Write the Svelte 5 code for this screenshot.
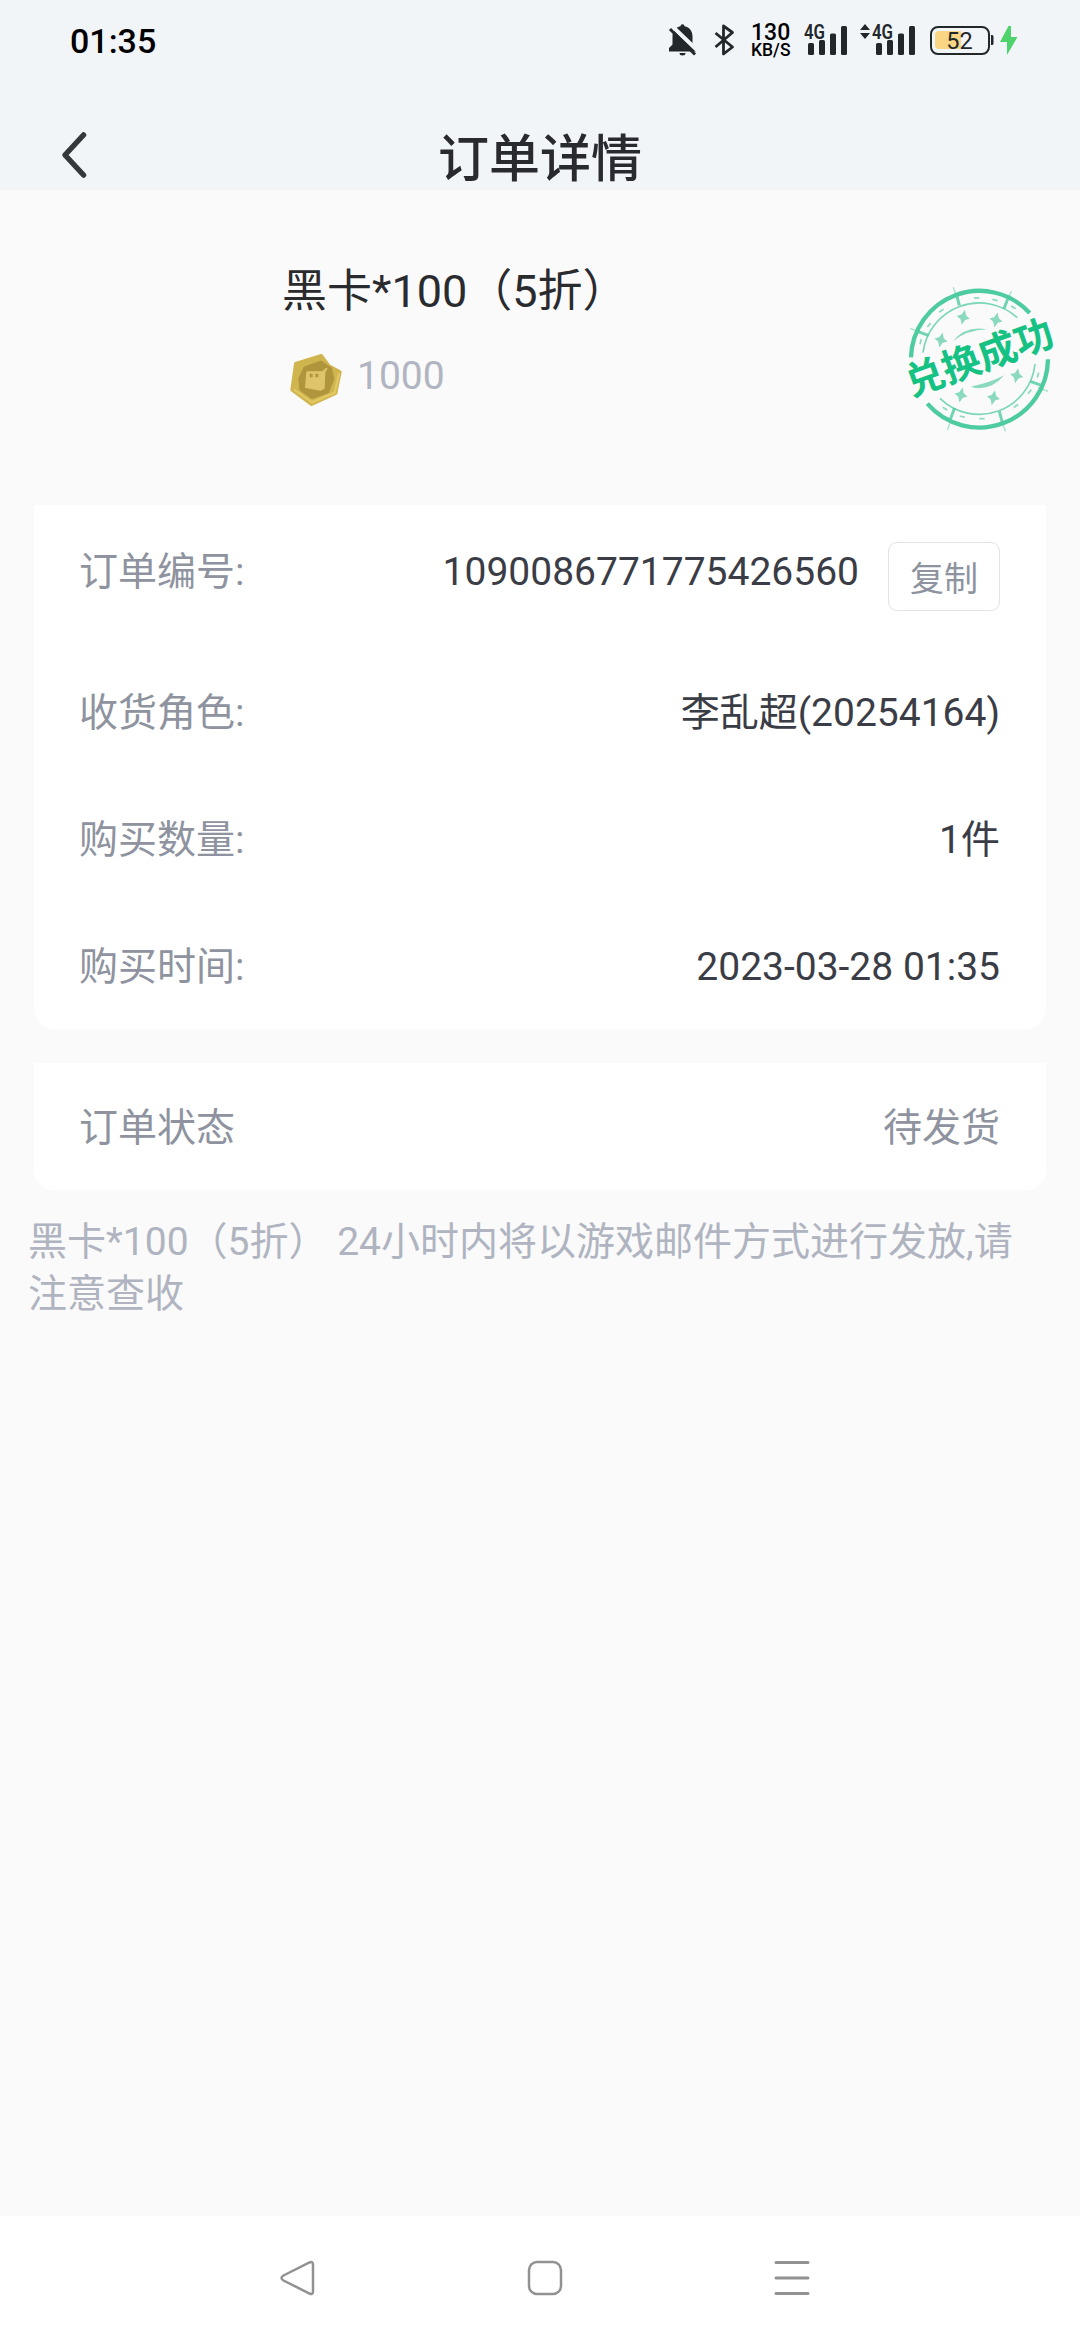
<script>
    const order = {
        name: '黑卡*100（5折）',
        price: '1000',
        number: '1090086771775426560',
        status: '待发货'
    };

    const rows = [
        { label: '收货角色:', value: '李乱超(20254164)' },
        { label: '购买数量:', value: '1件' },
        { label: '购买时间:', value: '2023-03-28 01:35' }
    ];

    const stars = [[250, 142], [348, 150], [183, 210], [410, 317], [340, 383], [243, 375]];

    // x, y, rotation of the short dashes in the stamp's ring
    const dashes = [
        [122, 215, -75], [147, 165, -52], [184, 122, -35], [290, 84, 0], [345, 90, 14], [400, 112, 32],
        [474, 315, -75], [449, 365, -52], [408, 408, -35], [306, 446, 0], [247, 440, 14], [195, 416, 32]
    ];

    function copyNumber() {
        navigator.clipboard?.writeText(order.number);
    }
</script>

{#snippet signal()}
    <svg class="signal" width="44" height="32" viewBox="0 0 44 32">
        <text x="0" y="14.5" textLength="21" lengthAdjust="spacingAndGlyphs">4G</text>
        <rect x="4" y="19" width="6" height="12" rx="1.5"/>
        <rect x="15" y="16" width="6" height="15" rx="1.5"/>
        <rect x="26" y="9.5" width="6" height="21.5" rx="1.5"/>
        <rect x="37" y="2" width="6" height="29" rx="1.5"/>
    </svg>
{/snippet}

<div class="page">
    <header>
        <div class="status-bar">
            <span class="clock">01:35</span>
            <div class="status-icons">
                <svg class="bell" width="30" height="32" viewBox="0 0 30 32">
                    <path fill="#22272a" d="M12.500 2.200a2 2 0 0 1 4 0c5.200 1 8 5 8 10v7.300l4.500 4.500v3.500H1v-3.500l3.500-3.500v-8c0-5 3-9.300 8-10.300z"/>
                    <path fill="#22272a" d="M11.500 29h6a3 2.500 0 0 1-6 0z"/>
                    <path stroke="#f2f5f8" stroke-width="4" d="M5 3l25 24"/>
                    <path stroke="#22272a" stroke-width="3" d="M2 5l25 25.500"/>
                </svg>
                <svg class="bluetooth" width="22" height="32" viewBox="0 0 22 32">
                    <path fill="none" stroke="#22272a" stroke-width="2.800" stroke-linejoin="round" d="M1.500 9l17 14-9 7V2l9 6.500-17 14.500"/>
                </svg>
                <div class="speed">
                    <b>130</b>
                    <span>KB/S</span>
                </div>
                {@render signal()}
                <svg class="data" width="12" height="16" viewBox="0 0 12 16">
                    <path fill="#22272a" d="M1 6l5-6 5 6zM1 9h10l-5 6z"/>
                </svg>
                {@render signal()}
                <svg width="64" height="32" viewBox="0 0 64 32">
                    <rect x="1" y="3" width="58" height="27" rx="7" fill="none" stroke="#22272a" stroke-width="2"/>
                    <path fill="#fad583" d="M9 7h22v18H9a4 4 0 0 1-4-4V11a4 4 0 0 1 4-4z"/>
                    <path fill="#22272a" d="M61 11h1a1.500 1.500 0 0 1 1.500 1.500v7A1.500 1.500 0 0 1 62 21h-1z"/>
                    <text class="battery-text" x="29.500" y="25" text-anchor="middle">52</text>
                </svg>
                <svg class="bolt" width="20" height="32" viewBox="0 0 20 32">
                    <path fill="#4fd36c" d="M9.500 2L1 18h7v13l10.500-18h-6.500V2z"/>
                </svg>
            </div>
        </div>
        <div class="title-bar">
            <button class="back" aria-label="返回">
                <svg width="28" height="50" viewBox="0 0 28 50">
                    <path d="M23.500 5L5 25l18.500 20" fill="none" stroke="#35383a" stroke-width="5.500" stroke-linecap="round" stroke-linejoin="round"/>
                </svg>
            </button>
            <h1>订单详情</h1>
        </div>
    </header>

    <section class="product">
        <div class="info">
            <h2>{order.name}</h2>
            <div class="price">
                <svg width="54" height="54" viewBox="0 0 162 162">
                    <path fill="#d0b44e" stroke="#d0b44e" stroke-width="10" stroke-linejoin="round" d="M97 8l23 31 33 18-13 64-72 33-59-43 11-79z"/>
                    <path fill="none" stroke="#e3c861" stroke-width="7" stroke-linejoin="round" d="M150 61l-13 58-68 29-54-38"/>
                    <path fill="#b0953d" stroke="#b0953d" stroke-width="6" stroke-linejoin="round" d="M47 43l48-17 31 20 7 31-16 41-48 17-35-25-3-33z"/>
                    <path fill="#dfc46a" stroke="#dfc46a" stroke-width="4" stroke-linejoin="round" d="M54 57l47-1 12-10-6 12-2 48-10 5-45-8z"/>
                    <path fill="#b0953d" d="M62 62h9v11h-9zM79 62h9v11h-9z"/>
                </svg>
                <span>{order.price}</span>
            </div>
        </div>
        <svg class="stamp" width="200" height="180" viewBox="0 0 600 540">
            <g fill="none" stroke="#4fcba0">
                <path stroke-width="13" d="M93 262A205 205 0 0 1 449 129M504 268A206 206 0 0 1 142 401"/>
                <path stroke-width="5" opacity=".75" d="M129 248A170 170 0 0 1 412 143M465 282A168 168 0 0 1 180 385"/>
                <path stroke-width="9" opacity=".8" d="M112 184l33 12M229 72l9 34M385 82l-13 34M484 346l-33-12M367 458l-9-34M211 448l13-34"/>
                <path stroke-width="4" opacity=".5" d="M90 175l30 11M220 52l10 30M394 63l-9 24M504 364l-30-11M376 484l-10-30M202 480l9-24"/>
            </g>
            <g fill="#8bd9bf">
                {#each dashes as [x, y, angle]}
                    <rect x="-8" y="-2.500" width="16" height="5" transform="translate({x} {y}) rotate({angle})"/>
                {/each}
                {#each stars as [x, y]}
                    <path transform="translate({x} {y}) rotate(12)" d="M0-23L7-7 20 0 7 7 0 23-7 7-20 0-7-7z"/>
                {/each}
                <path d="M219 213q38-48 103-35q-60 2-103 35zM272 350q55 18 101-34q-44 23-101 34z"/>
            </g>
            <text x="298" y="303" text-anchor="middle" transform="rotate(-20 300 262)">兑换成功</text>
        </svg>
    </section>

    <section class="card">
        <div class="row first">
            <span class="label">订单编号:</span>
            <span class="value">{order.number}</span>
            <button class="copy" onclick={copyNumber}>复制</button>
        </div>
        {#each rows as row}
            <div class="row">
                <span class="label">{row.label}</span>
                <span class="value">{row.value}</span>
            </div>
        {/each}
    </section>

    <section class="card">
        <div class="row">
            <span class="label">订单状态</span>
            <span class="value muted">{order.status}</span>
        </div>
    </section>

    <p class="note">{order.name} 24小时内将以游戏邮件方式进行发放,请注意查收</p>

    <nav>
        <svg width="36" height="36" viewBox="0 0 36 36">
            <path d="M3.500 15.500L29.500 2.500Q33 1 33 4.500v27q0 3.500-3.500 2L3.500 20.500q-4-2.500 0-5z"/>
        </svg>
        <svg width="36" height="36" viewBox="0 0 36 36">
            <rect x="2" y="2" width="32" height="32" rx="8"/>
        </svg>
        <svg class="menu" width="36" height="36" viewBox="0 0 36 36">
            <path d="M2 2.500h32M2 18h32M2 33.500h32"/>
        </svg>
    </nav>
</div>

<style>
    :global(body) {
        margin: 0;
        background: #fafafa;
    }

    .page {
        display: flex;
        flex-direction: column;
        width: 1080px;
        height: 2340px;
        background: #fafafa;
        font-family: Roboto, 'Noto Sans CJK SC', sans-serif;
        font-size: 39px;
    }

    button {
        padding: 0;
        background: none;
        border: none;
        font-family: inherit;
        cursor: pointer;
    }

    svg {
        display: block;
        flex: none;
        overflow: visible;
    }

    /* Header */
    header {
        height: 190px;
        background: #f2f5f8;
    }

    .status-bar {
        display: flex;
        justify-content: space-between;
        height: 80px;
        padding: 0 61px 0 70px;
    }

    .clock {
        line-height: 82px;
        font-size: 34px;
        font-weight: 500;
        color: #000;
    }

    .status-icons {
        display: flex;
        align-items: flex-start;
        padding-top: 24px;
    }

    .bell {
        margin-right: 16px;
    }

    .bluetooth {
        margin-right: 15px;
    }

    .speed {
        display: flex;
        flex-direction: column;
        width: 53px;
        color: #000;
    }

    .speed b {
        height: 19px;
        line-height: 17px;
        font-size: 23px;
        font-weight: 500;
    }

    .speed span {
        line-height: 15px;
        font-size: 17.5px;
        font-weight: 500;
    }

    .signal {
        fill: #22272a;
        font-size: 20px;
        font-weight: 600;
    }

    .data {
        margin: 0 1px 0 11px;
    }

    .signal + svg:not(.data) {
        margin-left: 14px;
    }

    .battery-text {
        fill: #22272a;
        font-size: 23.5px;
        font-weight: 400;
    }

    .bolt {
        margin-left: 5px;
    }

    .title-bar {
        display: grid;
        grid-template-columns: 140px 1fr 140px;
        align-items: start;
        height: 110px;
    }

    .back {
        margin: 50px 0 0 60px;
        justify-self: start;
    }

    h1 {
        margin: 0;
        padding-top: 49px;
        line-height: 61px;
        text-align: center;
        font-size: 51px;
        font-weight: 500;
        color: #292a2f;
    }

    /* Product */
    .product {
        display: flex;
        justify-content: space-between;
        height: 235px;
        padding: 80px 0 0 282px;
    }

    h2 {
        margin: -10px 0 0;
        line-height: 64px;
        font-size: 45px;
        font-weight: 400;
        color: #2a2b2e;
    }

    .price {
        display: flex;
        align-items: center;
        gap: 14px;
        margin: 29px 0 0 7px;
        color: #b0b5c1;
    }

    .price span {
        line-height: 46px;
        margin-top: -9px;
    }

    .stamp text {
        fill: #16c184;
        font-family: 'Noto Sans CJK SC', sans-serif;
        font-size: 116px;
        font-weight: 700;
    }

    /* Cards */
    .card {
        margin: 0 34px 34px;
        background: #fff;
        border-radius: 0 0 20px 20px;
    }

    .row {
        display: flex;
        align-items: center;
        box-sizing: border-box;
        height: 127px;
        padding: 3px 46px 0 45px;
        line-height: 56px;
    }

    .row.first {
        height: 143px;
    }

    .first .label,
    .first .value {
        margin-top: -12px;
    }

    .label {
        color: #8e939f;
    }

    .value {
        margin-left: auto;
        color: #3b3d46;
    }

    .value.muted {
        color: #8e939f;
    }

    .copy {
        box-sizing: border-box;
        width: 112px;
        height: 69px;
        margin: -3px 0 0 29px;
        border: 1px solid #e2e3e7;
        border-radius: 9px;
        font-size: 34px;
        color: #8e939f;
    }

    .note {
        width: 1000px;
        margin: -8px 0 0 28px;
        line-height: 52px;
        color: #afb4c0;
    }

    /* Navigation */
    nav {
        display: flex;
        gap: 211px;
        box-sizing: border-box;
        height: 124px;
        margin-top: auto;
        padding: 44px 0 0 280px;
        background: #fff;
        fill: none;
        stroke: #929292;
        stroke-width: 2.500;
    }

    .menu {
        stroke-width: 3;
        stroke-linecap: round;
    }
</style>
